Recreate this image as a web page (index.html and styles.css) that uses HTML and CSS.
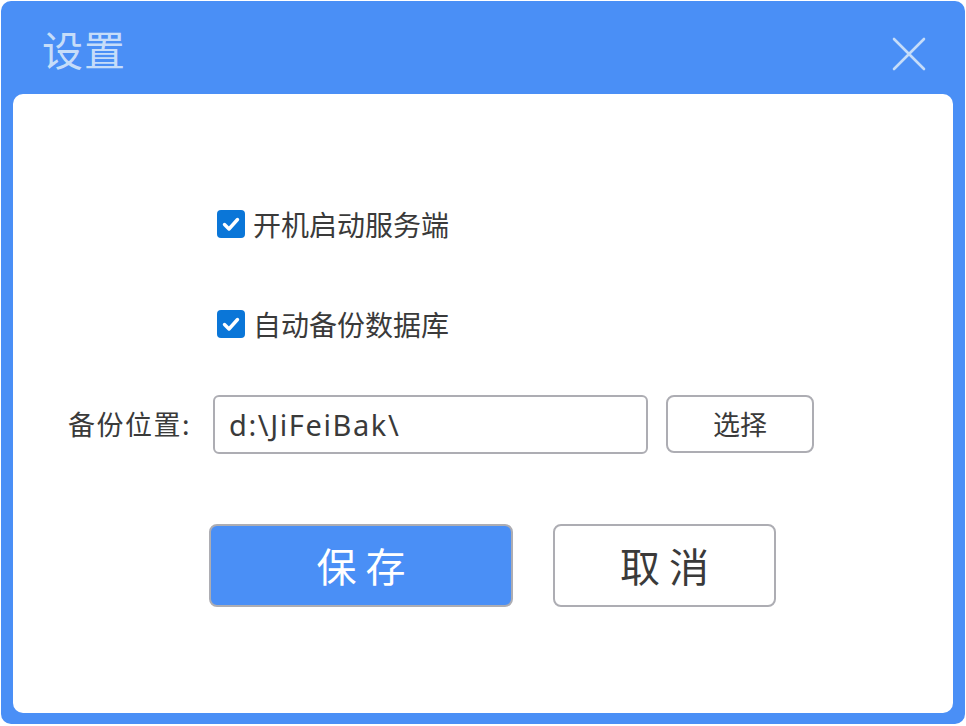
FILE: index.html
```html
<!DOCTYPE html>
<html lang="zh-CN">
<head>
<meta charset="utf-8">
<title>设置</title>
<link rel="stylesheet" href="styles.css">
</head>
<body>
<div class="window">
  <div class="header">
    <div class="title">设置</div>
    <div class="close">
      <svg width="34" height="34" viewBox="0 0 34 34"><path d="M2 2 L32 32 M32 2 L2 32" stroke="#c6ddf9" stroke-width="2.6" stroke-linecap="round" fill="none"/></svg>
    </div>
  </div>
  <div class="panel">
    <div class="check-row first">
      <span class="checkbox"><svg width="28" height="28" viewBox="0 0 28 28"><path d="M7.5 14.5 L12 19 L20.5 9.5" stroke="#fff" stroke-width="3.4" stroke-linecap="round" stroke-linejoin="round" fill="none"/></svg></span>
      <span class="check-label">开机启动服务端</span>
    </div>
    <div class="check-row second">
      <span class="checkbox"><svg width="28" height="28" viewBox="0 0 28 28"><path d="M7.5 14.5 L12 19 L20.5 9.5" stroke="#fff" stroke-width="3.4" stroke-linecap="round" stroke-linejoin="round" fill="none"/></svg></span>
      <span class="check-label">自动备份数据库</span>
    </div>
    <div class="path-row">
      <span class="path-label">备份位置:</span>
      <div class="path-input">d:\JiFeiBak\</div>
      <div class="choose-btn">选择</div>
    </div>
    <div class="action-row">
      <div class="btn btn-save">保 存</div>
      <div class="btn btn-cancel">取 消</div>
    </div>
  </div>
</div>
</body>
</html>
```

FILE: styles.css
```css
html, body {
  margin: 0;
  padding: 0;
  background: #ffffff;
}

body {
  font-family: "Noto Sans CJK SC", "Noto Sans", sans-serif;
  color: #3a3a3a;
}

.window {
  margin: 1px;
  width: 964px;
  height: 723px;
  box-sizing: border-box;
  background: #4a8ff6;
  border-radius: 10px;
  padding: 0 12px 11px 12px;
  display: flex;
  flex-direction: column;
}

.header {
  height: 93px;
  flex: none;
  display: flex;
  align-items: center;
  justify-content: space-between;
  padding: 0 27px 0 29px;
}

.title {
  font-size: 41px;
  line-height: 50px;
  color: #c6ddf9;
  letter-spacing: 1px;
}

.close {
  width: 34px;
  height: 34px;
  margin-top: 13px;
}

.close svg {
  display: block;
}

.panel {
  flex: 1;
  background: #ffffff;
  border-radius: 10px;
  display: flex;
  flex-direction: column;
}

.check-row {
  display: flex;
  align-items: center;
  height: 40px;
  padding-left: 204px;
}

.check-row.first {
  margin-top: 110px;
}

.check-row.second {
  margin-top: 60px;
}

.checkbox {
  width: 28px;
  height: 28px;
  border-radius: 4px;
  background: #0a76d8;
  flex: none;
}

.checkbox svg {
  display: block;
}

.check-label {
  margin-left: 8px;
  font-size: 28px;
  line-height: 40px;
  color: #3a3a3a;
}

.path-row {
  margin-top: 50px;
  display: flex;
  align-items: center;
  padding-left: 55px;
  height: 60px;
}

.path-label {
  width: 145px;
  flex: none;
  font-size: 27px;
  letter-spacing: 1.5px;
  line-height: 40px;
  color: #3a3a3a;
}

.path-input {
  width: 435px;
  height: 59px;
  box-sizing: border-box;
  border: 2px solid #adadb3;
  border-radius: 6px;
  padding-left: 14px;
  font-family: "Noto Sans", "Noto Sans CJK SC", sans-serif;
  font-size: 29px;
  letter-spacing: 1.6px;
  line-height: 55px;
  color: #3a3a3a;
}

.choose-btn {
  margin-left: 18px;
  width: 148px;
  height: 58px;
  box-sizing: border-box;
  border: 2px solid #adadb3;
  border-radius: 8px;
  font-size: 27px;
  line-height: 54px;
  text-align: center;
  color: #3a3a3a;
}

.action-row {
  margin-top: 70px;
  display: flex;
  padding-left: 196px;
  gap: 40px;
}

.btn {
  height: 83px;
  box-sizing: border-box;
  border: 2px solid #adadb3;
  border-radius: 8px;
  font-size: 40px;
  line-height: 79px;
  text-align: center;
}

.btn-save {
  width: 304px;
  background: #4a8ff6;
  color: #ffffff;
}

.btn-cancel {
  width: 223px;
  background: #ffffff;
  color: #3a3a3a;
}
```
